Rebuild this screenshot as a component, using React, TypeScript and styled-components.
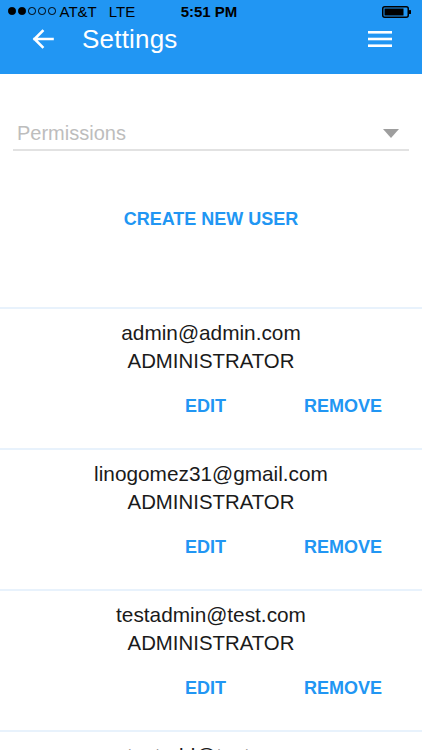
import styled, { createGlobalStyle } from "styled-components";

const GlobalStyle = createGlobalStyle`
  html, body {
    margin: 0;
    padding: 0;
    background: #ffffff;
    font-family: "Liberation Sans", Arial, sans-serif;
  }
  *, *::before, *::after {
    box-sizing: border-box;
  }
  body {
    width: 422px;
    height: 750px;
    overflow: hidden;
  }
`;

const users = [
  { email: "admin@admin.com", role: "ADMINISTRATOR" },
  { email: "linogomez31@gmail.com", role: "ADMINISTRATOR" },
  { email: "testadmin@test.com", role: "ADMINISTRATOR" },
  { email: "testadd@test.com", role: "ADMINISTRATOR" },
];

const signal = [true, true, false, false, false];

export default function App(): JSX.Element {
  return (
    <>
      <GlobalStyle />
      <Page>
        <Header>
          <StatusBar>
            <Carrier>
              <Signal>
                {signal.map((on, i) => (
                  <Dot key={i} $on={on} />
                ))}
              </Signal>
              <span>AT&amp;T</span>
              <Network>LTE</Network>
            </Carrier>
            <Clock>5:51 PM</Clock>
            <Battery>
              <svg width="30" height="12" viewBox="0 0 30 12">
                <rect x="0.75" y="0.75" width="25.5" height="10.5" rx="2" fill="none" stroke="#000" strokeWidth="1.5" />
                <rect x="2.5" y="2.5" width="19" height="7" fill="#000" />
                <rect x="27" y="4" width="2" height="4" rx="0.5" fill="#000" />
              </svg>
            </Battery>
          </StatusBar>
          <Toolbar>
            <IconButton aria-label="Back">
              <svg width="22" height="20" viewBox="0 0 22 20">
                <path d="M20.5 10H2.5M10.5 2L2.5 10L10.5 18" fill="none" stroke="#fff" strokeWidth="2.6" strokeLinecap="square" />
              </svg>
            </IconButton>
            <Title>Settings</Title>
            <MenuButton aria-label="Menu">
              <svg width="24" height="18" viewBox="0 0 24 18">
                <rect x="0" y="1" width="24" height="2.6" fill="#fff" />
                <rect x="0" y="7.7" width="24" height="2.6" fill="#fff" />
                <rect x="0" y="14.4" width="24" height="2.6" fill="#fff" />
              </svg>
            </MenuButton>
          </Toolbar>
        </Header>

        <Form>
          <Select>
            <Placeholder>Permissions</Placeholder>
            <Caret />
          </Select>
          <CreateButton>CREATE NEW USER</CreateButton>
        </Form>

        <UserList>
          {users.map((u) => (
            <UserCard key={u.email}>
              <Email>{u.email}</Email>
              <Role>{u.role}</Role>
              <Actions>
                <ActionButton>EDIT</ActionButton>
                <ActionButton>REMOVE</ActionButton>
              </Actions>
            </UserCard>
          ))}
        </UserList>
      </Page>
    </>
  );
}

const Page = styled.div`
  width: 422px;
  height: 750px;
  overflow: hidden;
  background: #fff;
`;

const Header = styled.header`
  background: #2196f3;
  height: 74px;
  display: flex;
  flex-direction: column;
`;

const StatusBar = styled.div`
  height: 22px;
  display: flex;
  align-items: center;
  padding: 0 10px 0 8px;
  color: #000;
  font-size: 15px;
  position: relative;
`;

const Carrier = styled.div`
  display: flex;
  align-items: center;
  flex: 1;
`;

const Signal = styled.span`
  display: flex;
  gap: 2.5px;
  margin-right: 4px;
`;

const Dot = styled.span<{ $on: boolean }>`
  width: 7.5px;
  height: 7.5px;
  border-radius: 50%;
  border: 1px solid #000;
  background: ${({ $on }) => ($on ? "#000" : "transparent")};
`;

const Network = styled.span`
  margin-left: 12px;
`;

const Clock = styled.div`
  position: absolute;
  left: 0;
  right: 0;
  text-align: center;
  font-weight: 700;
  pointer-events: none;
  padding-right: 4px;
`;

const Battery = styled.div`
  display: flex;
  align-items: center;
  padding-top: 1px;
`;

const Toolbar = styled.div`
  height: 34px;
  display: flex;
  align-items: center;
  padding: 0 30px 0 32px;
`;

const IconButton = styled.div`
  width: 22px;
  height: 20px;
  display: flex;
  align-items: center;
`;

const Title = styled.h1`
  margin: 0 0 0 28px;
  flex: 1;
  color: #fff;
  font-size: 26px;
  font-weight: 400;
  letter-spacing: 0.2px;
`;

const MenuButton = styled.div`
  width: 24px;
  height: 18px;
  display: flex;
`;

const Form = styled.section`
  padding: 44px 13px 0;
  display: flex;
  flex-direction: column;
  align-items: stretch;
  height: 233px;
`;

const Select = styled.div`
  height: 33px;
  border-bottom: 2px solid #e2e2e2;
  display: flex;
  align-items: center;
  justify-content: space-between;
  padding: 0 10px 0 4px;
`;

const Placeholder = styled.span`
  color: #bdbdbd;
  font-size: 20px;
`;

const Caret = styled.span`
  width: 0;
  height: 0;
  border-left: 8.5px solid transparent;
  border-right: 8.5px solid transparent;
  border-top: 9px solid #9e9e9e;
`;

const CreateButton = styled.div`
  margin-top: 48px;
  align-self: center;
  height: 40px;
  line-height: 40px;
  color: #2196f3;
  font-size: 18px;
  font-weight: 700;
`;

const UserList = styled.ul`
  list-style: none;
  margin: 0;
  padding: 0;
`;

const UserCard = styled.li`
  border-top: 2px solid #e8f2fc;
  height: 141px;
  padding-top: 9px;
  display: flex;
  flex-direction: column;
  align-items: center;
  color: #1a1a1a;
`;

const Email = styled.div`
  font-size: 20.8px;
  line-height: 29px;
`;

const Role = styled.div`
  font-size: 20.4px;
  line-height: 29px;
`;

const Actions = styled.div`
  align-self: stretch;
  margin-top: 10px;
  height: 40px;
  display: flex;
  align-items: center;
  justify-content: flex-end;
  gap: 78px;
  padding-right: 40px;
`;

const ActionButton = styled.span`
  color: #2196f3;
  font-size: 18px;
  font-weight: 700;
`;
